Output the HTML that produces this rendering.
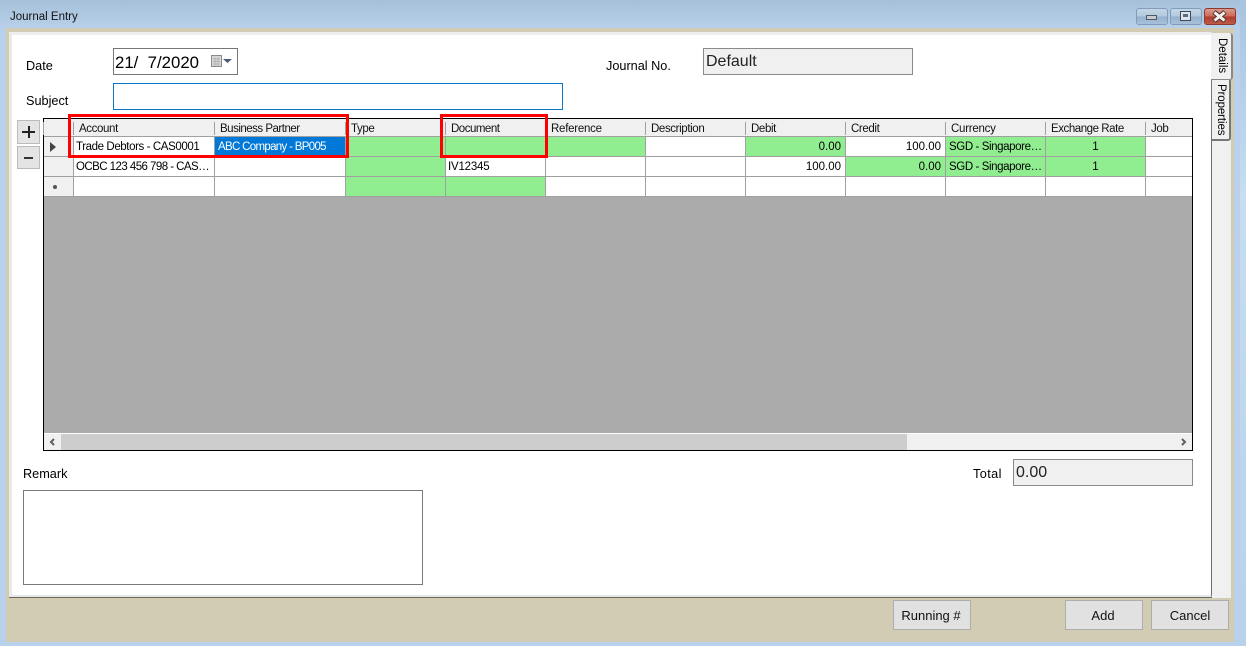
<!DOCTYPE html>
<html><head><meta charset="utf-8"><style>
html,body{margin:0;padding:0}
body{width:1246px;height:646px;overflow:hidden;position:relative;background:#b9d1ea;font-family:"Liberation Sans",sans-serif;font-size:12.7px;color:#000}
div{position:absolute;box-sizing:border-box}
.t{white-space:nowrap;line-height:14px}
.h{top:119px;height:18px;background:#f0f0f0;border-bottom:1px solid #a0a0a0;padding-left:5px;padding-top:1px;font-size:11.5px;line-height:18px;color:#111;white-space:nowrap;letter-spacing:-.38px}
.h:after{content:"";position:absolute;left:-1px;top:3px;width:1px;height:13px;background:#a0a0a0}
.c{height:20px;border-right:1px solid #a0a0a0;border-bottom:1px solid #a0a0a0;background:#fff;line-height:19px;padding:1px 3px 0;white-space:nowrap;font-size:11.5px;overflow:hidden}
.g{background:#90ee90}
.r{text-align:right;padding-right:4px}
.m{text-align:center}
.s{letter-spacing:-.4px}
.btn{background:#e1e1e1;border:1px solid #adadad;text-align:center;font-size:13px;line-height:29px;color:#111}
.red{border:3px solid #f00}
.wb{top:8px;width:32px;height:17px;border:1px solid #7f9db9;border-radius:3px;background:linear-gradient(#c4d6e8 0,#b4cade 48%,#94b0cc 52%,#a8c2da)}
</style></head><body>
<div style="left:0;top:0;width:1246px;height:30px;background:linear-gradient(#a6c0da,#b9d1ea)"></div>
<div style="left:1240px;top:0;width:6px;height:646px;background:linear-gradient(#a8c4e0,#c6ddf2 30%,#b9d1ea)"></div>
<div class="t" style="left:10px;top:10px;font-size:11.5px;color:#111">Journal Entry</div>

<div class="wb" style="left:1136px"></div>
<div style="left:1146px;top:15px;width:11px;height:5px;background:#c8ccd0;border:1px solid #4a5a68"></div>
<div class="wb" style="left:1170px"></div>
<div style="left:1180px;top:11px;width:11px;height:10px;background:#dde4ea;border:1px solid #3c4a58"></div>
<div style="left:1183px;top:14px;width:5px;height:3px;background:#5a6c80"></div>
<div class="wb" style="left:1204px;border-color:#8a3a30;background:linear-gradient(#dc9a8c,#cc6a58 48%,#b03c2c 52%,#c05a48)"></div>
<svg style="position:absolute;left:1204px;top:8px" width="32" height="17"><path d="M10 4L21 13M21 4L10 13" stroke="#4a3432" stroke-width="5"/><path d="M10.5 4.5L20.5 12.5M20.5 4.5L10.5 12.5" stroke="#f4f0ee" stroke-width="3"/></svg>

<div style="left:6px;top:28px;width:1228px;height:614px;background:#d3ccb4"></div>
<div style="left:9px;top:32px;width:1203px;height:566px;background:#fff;border-left:3px solid #eaeaea;border-top:3px solid #eee;border-bottom:3px solid #e6e6e6;border-right:1px solid #6e6e6e"></div>
<div style="left:9px;top:597px;width:1203px;height:1px;background:#6e6a60"></div>
<div style="left:1212px;top:140px;width:19px;height:458px;background:#f0f0f0"></div>

<div style="left:1211px;top:79px;width:20px;height:62px;background:#f0f0f0;border:1px solid #777;border-right:2px solid #777;border-bottom:2px solid #777;border-radius:0 2px 3px 0"></div>
<div style="left:1211px;top:33px;width:22px;height:47px;background:#f0f0f0;border-right:2px solid #888;border-bottom:1px solid #888;border-radius:0 3px 3px 0"></div>
<div class="t" style="left:1215px;top:38px;writing-mode:vertical-rl;font-size:11.5px">Details</div>
<div class="t" style="left:1214px;top:84px;writing-mode:vertical-rl;font-size:11.5px;letter-spacing:-.1px">Properties</div>

<div class="t" style="left:26px;top:59px">Date</div>
<div style="left:113px;top:48px;width:125px;height:27px;border:1px solid #777;background:#fff"></div>
<div class="t" style="left:115px;top:54px;font-size:16.8px;line-height:18px;white-space:pre">21/  7/2020</div>
<svg style="position:absolute;left:210px;top:54px" width="22" height="15"><rect x="1.5" y="1.5" width="10" height="11" fill="#d8d8d8" stroke="#8a8a8a"/><path d="M3 5H10M3 7.5H10M3 10H10M5 3V12M8 3V12" stroke="#aaa" stroke-width=".7"/><path d="M13 5H22L17.5 9Z" fill="#4a5a78"/></svg>
<div class="t" style="left:26px;top:94px">Subject</div>
<div style="left:113px;top:83px;width:450px;height:27px;border:1px solid #0a78c8;background:#fff"></div>
<div class="t" style="left:606px;top:59px">Journal No.</div>
<div style="left:703px;top:48px;width:210px;height:27px;border:1px solid #8a8a8a;background:#f0f0f0"></div>
<div class="t" style="left:706px;top:53px;font-size:16px;line-height:18px;color:#222">Default</div>

<div class="btn" style="left:17px;top:120px;width:23px;height:24px;background:#e4e4e4;border-color:#bbb"></div>
<div style="left:22px;top:131px;width:13px;height:2px;background:#222"></div>
<div style="left:28px;top:126px;width:1.5px;height:12px;background:#222"></div>
<div class="btn" style="left:17px;top:146px;width:23px;height:23px;background:#e4e4e4;border-color:#bbb"></div>
<div style="left:24px;top:157px;width:9px;height:2px;background:#333"></div>

<div style="left:43px;top:118px;width:1150px;height:333px;background:#ababab;border:1px solid #000"></div>
<div class="h" style="left:44px;width:30px"></div>
<div class="h" style="left:74px;width:141px">Account</div>
<div class="h" style="left:215px;width:131px;letter-spacing:-.5px">Business Partner</div>
<div class="h" style="left:346px;width:100px">Type</div>
<div class="h" style="left:446px;width:100px;letter-spacing:-.5px">Document</div>
<div class="h" style="left:546px;width:100px;letter-spacing:-.25px">Reference</div>
<div class="h" style="left:646px;width:100px">Description</div>
<div class="h" style="left:746px;width:100px">Debit</div>
<div class="h" style="left:846px;width:100px">Credit</div>
<div class="h" style="left:946px;width:100px;letter-spacing:-.25px">Currency</div>
<div class="h" style="left:1046px;width:100px;letter-spacing:-.45px">Exchange Rate</div>
<div class="h" style="left:1146px;width:46px">Job</div>

<div class="c" style="left:44px;top:137px;width:30px;background:#f0f0f0"></div>
<div style="left:50px;top:142px;width:0;height:0;border-top:5px solid transparent;border-bottom:5px solid transparent;border-left:6px solid #444"></div>
<div class="c s" style="left:74px;top:137px;width:141px;padding-left:2px">Trade Debtors - CAS0001</div>
<div class="c" style="left:215px;top:137px;width:131px;background:#0078d7;color:#fff;letter-spacing:-.68px">ABC Company - BP005</div>
<div class="c g" style="left:346px;top:137px;width:100px"></div>
<div class="c g" style="left:446px;top:137px;width:100px"></div>
<div class="c g" style="left:546px;top:137px;width:100px"></div>
<div class="c" style="left:646px;top:137px;width:100px"></div>
<div class="c g r" style="left:746px;top:137px;width:100px">0.00</div>
<div class="c r" style="left:846px;top:137px;width:100px">100.00</div>
<div class="c g s" style="left:946px;top:137px;width:100px">SGD - Singapore…</div>
<div class="c g m" style="left:1046px;top:137px;width:100px">1</div>
<div class="c" style="left:1146px;top:137px;width:46px;border-right:0"></div>

<div class="c" style="left:44px;top:157px;width:30px;background:#f0f0f0"></div>
<div class="c" style="left:74px;top:157px;width:141px;letter-spacing:-.55px;padding-left:2px">OCBC 123 456 798 - CAS…</div>
<div class="c" style="left:215px;top:157px;width:131px"></div>
<div class="c g" style="left:346px;top:157px;width:100px"></div>
<div class="c" style="left:446px;top:157px;width:100px;padding-left:2px;letter-spacing:-.2px">IV12345</div>
<div class="c" style="left:546px;top:157px;width:100px"></div>
<div class="c" style="left:646px;top:157px;width:100px"></div>
<div class="c r" style="left:746px;top:157px;width:100px">100.00</div>
<div class="c g r" style="left:846px;top:157px;width:100px">0.00</div>
<div class="c g s" style="left:946px;top:157px;width:100px">SGD - Singapore…</div>
<div class="c g m" style="left:1046px;top:157px;width:100px">1</div>
<div class="c" style="left:1146px;top:157px;width:46px;border-right:0"></div>

<div class="c" style="left:44px;top:177px;width:30px;background:#f0f0f0"></div>
<div style="left:53px;top:185px;width:4px;height:4px;border-radius:50%;background:#555"></div>
<div class="c" style="left:74px;top:177px;width:141px"></div>
<div class="c" style="left:215px;top:177px;width:131px"></div>
<div class="c g" style="left:346px;top:177px;width:100px"></div>
<div class="c g" style="left:446px;top:177px;width:100px"></div>
<div class="c" style="left:546px;top:177px;width:100px"></div>
<div class="c" style="left:646px;top:177px;width:100px"></div>
<div class="c" style="left:746px;top:177px;width:100px"></div>
<div class="c" style="left:846px;top:177px;width:100px"></div>
<div class="c" style="left:946px;top:177px;width:100px"></div>
<div class="c" style="left:1046px;top:177px;width:100px"></div>
<div class="c" style="left:1146px;top:177px;width:46px;border-right:0"></div>

<div style="left:44px;top:433px;width:1148px;height:1px;background:#fff"></div>
<div style="left:44px;top:434px;width:1148px;height:16px;background:#f0f0f0"></div>
<div style="left:61px;top:434px;width:846px;height:16px;background:#cdcdcd"></div>
<svg style="position:absolute;left:44px;top:434px" width="17" height="16"><path d="M10 5L7 8L10 11" fill="none" stroke="#606060" stroke-width="2"/></svg>
<svg style="position:absolute;left:1175px;top:434px" width="17" height="16"><path d="M7 5L10 8L7 11" fill="none" stroke="#606060" stroke-width="2"/></svg>

<div class="red" style="left:68px;top:114px;width:281px;height:44px"></div>
<div class="red" style="left:440px;top:114px;width:108px;height:44px"></div>

<div class="t" style="left:23px;top:467px">Remark</div>
<div style="left:23px;top:490px;width:400px;height:95px;border:1px solid #7a7a7a;background:#fff"></div>
<div class="t" style="left:973px;top:467px;letter-spacing:.4px">Total</div>
<div style="left:1013px;top:459px;width:180px;height:27px;border:1px solid #8a8a8a;background:#f0f0f0"></div>
<div class="t" style="left:1016px;top:464px;font-size:16px;line-height:18px;color:#222">0.00</div>

<div class="btn" style="left:893px;top:600px;width:78px;height:30px;padding-right:2px">Running #</div>
<div class="btn" style="left:1065px;top:600px;width:78px;height:30px;padding-right:2px">Add</div>
<div class="btn" style="left:1151px;top:600px;width:78px;height:30px">Cancel</div>
</body></html>
